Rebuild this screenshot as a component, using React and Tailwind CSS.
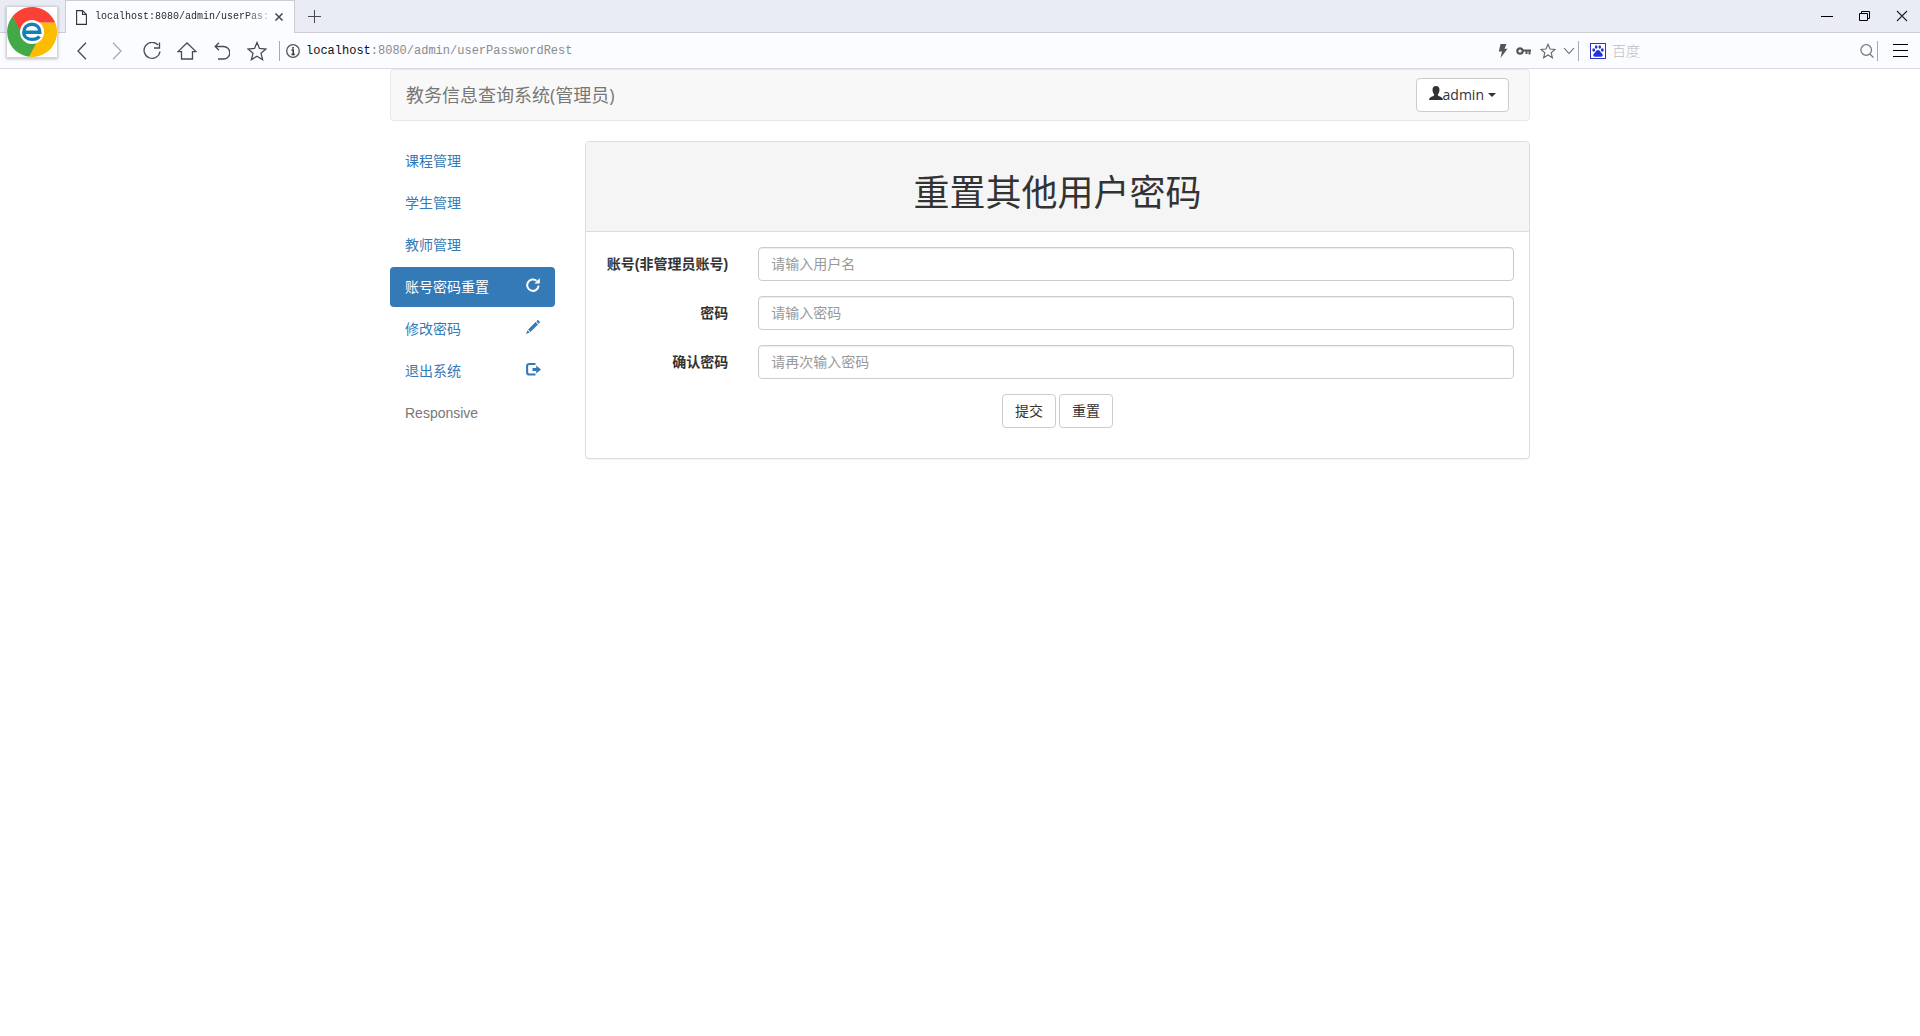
import React from "react";

const cjk = "font-['Liberation_Sans','Noto_Sans_CJK_SC',sans-serif]";

function BrowserLogo() {
  return (
    <svg width="50" height="50" viewBox="0 0 50 50" aria-hidden="true">
      <path d="M25 25 L20 15.500 H48.200 A25 25 0 0 1 22 49.800 Z" fill="#fcbd00" />
      <path d="M25 25 L31 33 L22 49.800 A25 25 0 0 1 5.500 9.500 L16 26 Z" fill="#43a847" />
      <path d="M5.500 9.500 L14 25 L25 25 L30 15.500 H48.200 A25 25 0 0 0 5.500 9.500 Z" fill="#fb4035" />
      <circle cx="25" cy="25" r="12" fill="#fff" />
      <path
        d="M17 25.300 H32.800 C32.800 20.500 29.600 17.300 25 17.300 C20.300 17.300 16.800 20.500 16.800 25.200 C16.800 29.800 20.300 32.400 25.200 32.400 C28.500 32.400 30.800 31.500 32.500 29.500"
        fill="none"
        stroke="#147fb5"
        strokeWidth="3.400"
      />
    </svg>
  );
}

function Line({ w, h, d, stroke = "#4a4a4f", sw = 1.3 }) {
  return (
    <svg width={w} height={h} viewBox={`0 0 ${w} ${h}`} fill="none" stroke={stroke} strokeWidth={sw} aria-hidden="true">
      <path d={d} />
    </svg>
  );
}

const star20 = "M10 1.5 L12.5 7.5 L19 8 L14 12.3 L15.6 18.7 L10 15.2 L4.4 18.7 L6 12.3 L1 8 L7.5 7.5 Z";
const star16 = "M8 1.3 L10 6 L15 6.4 L11.2 9.8 L12.4 14.8 L8 12 L3.6 14.8 L4.8 9.8 L1 6.4 L6 6 Z";

const tools = [
  { label: "后退", w: 10, h: 18, d: "M9 .8 L1 9 L9 17.2" },
  { label: "前进", w: 10, h: 18, d: "M1 .8 L9 9 L1 17.2", stroke: "#a9aab0" },
  { label: "刷新", w: 18, h: 18, d: "M15.2 3.2 A8 8 0 1 0 17 9.5 M16.5 .5 V6 H11" },
  { label: "主页", w: 20, h: 18, d: "M1 9.6 L10 1 L19 9.6 H15.5 V17 H4.5 V9.6 Z" },
  { label: "撤销", w: 16, h: 18, d: "M5 .8 L1.2 4.5 L5 8.2 M1.2 4.5 H9.5 A6.2 6.2 0 0 1 9.5 17 H4" },
  { label: "收藏", w: 20, h: 20, d: star20 },
];

function BrowserChrome() {
  return (
    <header className="relative font-['Liberation_Sans','Noto_Sans_CJK_SC',sans-serif]">
      <div className="flex h-[33px] bg-[#e9ecf5]">
        <div className="w-[65px] border-b border-[#cbcdd3]" />
        <div className="flex w-[230px] items-center border-x border-t border-[#cbcdd3] bg-[#fbfcff] pl-[10px]">
          <svg width="11" height="15" viewBox="0 0 11 15" fill="none" stroke="#333" strokeWidth="1.1" aria-hidden="true">
            <path d="M.6 .6 H6.5 L10.4 4.5 V14.4 H.6 Z M6.5 .6 V4.5 H10.4" />
          </svg>
          <span className="ml-2 bg-linear-to-r from-[#222] from-85% to-[#c8c8c8] bg-clip-text font-['Liberation_Mono',monospace] text-[10px] leading-4 whitespace-nowrap text-transparent">
            localhost:8080/admin/userPas:
          </span>
          <button type="button" aria-label="关闭标签页" className="ml-[5px]">
            <Line w={10} h={10} d="M1.5 1.5 L8.5 8.5 M8.5 1.5 L1.5 8.5" sw={1.6} />
          </button>
        </div>
        <div className="flex flex-1 items-center justify-between border-b border-[#cbcdd3]">
          <button type="button" aria-label="新标签页" className="ml-[12px]">
            <Line w={14} h={14} d="M7.5 1 V14 M1 7.5 H14" sw={1} />
          </button>
          <div className="flex h-full">
            <button type="button" aria-label="最小化" className="flex w-[38px] items-center justify-center">
              <Line w={12} h={12} d="M0 6.5 H12" stroke="#000" sw={1} />
            </button>
            <button type="button" aria-label="还原" className="flex w-[38px] items-center justify-center">
              <Line w={12} h={12} d="M.5 3.5 H8.5 V10.5 H.5 Z M2.5 3.5 V1.5 H10.5 V8.5 H8.5" stroke="#000" sw={1} />
            </button>
            <button type="button" aria-label="关闭" className="flex w-9 items-center justify-center">
              <Line w={12} h={12} d="M1 1 L11 11 M11 1 L1 11" stroke="#222" sw={1.1} />
            </button>
          </div>
        </div>
      </div>

      <div className="flex h-9 items-center border-b border-[#d8dadd] bg-[#fbfcff] pl-16">
        {tools.map((t) => (
          <button key={t.label} type="button" aria-label={t.label} className="flex w-[35px] shrink-0 items-center justify-center">
            <Line w={t.w} h={t.h} d={t.d} stroke={t.stroke} />
          </button>
        ))}
        <div className="ml-[5px] h-5 w-px bg-[#a9aaae]" />
        <svg className="ml-[6px]" width="14" height="14" viewBox="0 0 14 14" aria-hidden="true">
          <circle cx="7" cy="7" r="6.3" fill="none" stroke="#555" strokeWidth="1.3" />
          <path d="M7 3 V4.8 M5.5 6 H7.2 V10.5 M5.5 10.5 H8.8" fill="none" stroke="#333" strokeWidth="1.5" />
        </svg>
        <div role="textbox" aria-label="地址" className="ml-[6px] flex-1 pt-px font-['Liberation_Mono',monospace] text-[12px] leading-4 whitespace-nowrap text-[#8a8a8a]">
          <span className="text-[#111]">localhost</span>:8080/admin/userPasswordRest
        </div>
        <div className="flex items-center">
          <svg width="10" height="14" viewBox="0 0 10 14" fill="#555" aria-hidden="true">
            <path d="M2.5 0 H8.5 L6.5 4.8 H9.5 L2.5 14 L4 7.5 H.8 Z" />
          </svg>
          <svg className="ml-2" width="15" height="10" viewBox="0 0 15 10" fill="none" stroke="#555" aria-hidden="true">
            <circle cx="4" cy="5" r="2.7" strokeWidth="2.2" />
            <path d="M7 4.5 H15 M10.5 5 V8 M13.5 5 V8.5" strokeWidth="2" />
          </svg>
          <button type="button" aria-label="添加收藏" className="ml-[9px]">
            <Line w={16} h={16} d={star16} stroke="#666" sw={1.1} />
          </button>
          <button type="button" aria-label="展开" className="ml-[7px]">
            <Line w={12} h={8} d="M1 1 L6 6.5 L11 1" stroke="#666" sw={1.1} />
          </button>
        </div>
        <div className="ml-[3px] h-5 w-px bg-[#a9aaae]" />
        <svg className="ml-[11px]" width="16" height="16" viewBox="0 0 16 16" aria-hidden="true">
          <rect x=".5" y=".5" width="15" height="15" fill="#fff" stroke="#2a35c0" />
          <g fill="#2433d6">
            <ellipse cx="3.7" cy="7" rx="1.4" ry="1.8" />
            <ellipse cx="6.2" cy="4" rx="1.3" ry="1.8" />
            <ellipse cx="9.8" cy="4" rx="1.3" ry="1.8" />
            <ellipse cx="12.3" cy="7" rx="1.4" ry="1.8" />
            <path d="M8 7 C10 7 10 9 12 10.5 C13.5 12 12.5 14 10.5 13.8 H5.5 C3.5 14 2.5 12 4 10.5 C6 9 6 7 8 7 Z" />
          </g>
        </svg>
        <input
          type="text"
          aria-label="搜索"
          placeholder="百度"
          className="ml-[6px] w-[236px] bg-transparent text-sm leading-5 outline-none placeholder:font-light placeholder:text-[#bdbdbd]"
        />
        <button type="button" aria-label="搜索" className="ml-[12px]">
          <Line w={14} h={14} d="M11.5 6 A5.3 5.3 0 1 1 .9 6 A5.3 5.3 0 1 1 11.5 6 Z M9.8 10 L13.5 13.5" stroke="#777" sw={1.2} />
        </button>
        <div className="ml-[3px] h-5 w-px bg-[#a9aaae]" />
        <button type="button" aria-label="菜单" className="mr-[12px] ml-[15px]">
          <Line w={15} h={13} d="M0 .5 H15 M0 6.5 H15 M0 12.5 H15" stroke="#000" sw={1} />
        </button>
      </div>

      <div className="absolute top-[6px] left-[6px] flex h-[52px] w-[52px] items-center justify-center border border-[#d2d3d6] bg-white shadow-[0_1px_3px_rgba(0,0,0,0.25)]">
        <BrowserLogo />
      </div>
    </header>
  );
}

function RepeatIcon() {
  return (
    <svg width="14" height="14" viewBox="0 0 14 14" aria-hidden="true">
      <path d="M10.6 2.8 A5.7 5.7 0 1 0 12.6 7.6" fill="none" stroke="currentColor" strokeWidth="2" />
      <path d="M13.8 .3 V5.5 H8.4 Z" fill="currentColor" />
    </svg>
  );
}

function PencilIcon() {
  return (
    <svg width="14" height="14" viewBox="0 0 14 14" fill="currentColor" aria-hidden="true">
      <path d="M11.3 .3 Q11.8 -.1 12.3 .3 L13.8 1.8 Q14.2 2.3 13.7 2.8 L12.7 3.8 L10.3 1.4 Z" />
      <path d="M9.6 2.1 L12 4.5 L4.5 12 L2.1 9.6 Z" />
      <path d="M1.5 10.3 L3.8 12.6 L0 14 Z" />
    </svg>
  );
}

function LogoutIcon() {
  return (
    <svg className="overflow-visible" width="14" height="14" viewBox="0 0 14 14" aria-hidden="true">
      <path d="M9.5 2 H3.5 Q1.1 2 1.1 4.3 V10.2 Q1.1 12.5 3.5 12.5 H9.5" fill="none" stroke="currentColor" strokeWidth="2.1" />
      <path d="M6.5 6 H10.2 V3.5 L15 7.5 L10.2 11.5 V9 H6.5 Z" fill="currentColor" />
    </svg>
  );
}

const links = [
  { text: "课程管理" },
  { text: "学生管理" },
  { text: "教师管理" },
  { text: "账号密码重置", Icon: RepeatIcon, active: true },
  { text: "修改密码", Icon: PencilIcon },
  { text: "退出系统", Icon: LogoutIcon },
];

function Sidebar() {
  return (
    <nav className="w-1/6 px-[15px]">
      <ul className="flex flex-col gap-[2px]">
        {links.map(({ text, Icon, active }) => (
          <li key={text}>
            <a
              href="#"
              aria-current={active ? "page" : undefined}
              className={
                "flex justify-between rounded px-[15px] py-[10px] leading-5 " +
                (active ? "bg-[#337ab7] text-white" : "text-[#337ab7]")
              }
            >
              {text}
              {Icon && (
                <span className="pt-px">
                  <Icon />
                </span>
              )}
            </a>
          </li>
        ))}
        <li className="px-[15px] py-[10px] leading-5 text-[#777]">Responsive</li>
      </ul>
    </nav>
  );
}

const fields = [
  { id: "account", label: "账号(非管理员账号)", hint: "请输入用户名", type: "text" },
  { id: "password", label: "密码", hint: "请输入密码", type: "password" },
  { id: "confirm", label: "确认密码", hint: "请再次输入密码", type: "password" },
];

const buttonStyle = "h-[34px] rounded border border-[#ccc] bg-white px-3 leading-5 text-[#333]";

function ResetPanel() {
  return (
    <main className="w-5/6 px-[15px]">
      <section className="rounded border border-[#ddd] bg-white shadow-[0_1px_1px_rgba(0,0,0,0.05)]">
        <div className="rounded-t-[3px] border-b border-[#ddd] bg-[#f5f5f5] px-[15px] pt-7 pb-[21px]">
          <h1 className="text-center font-['Noto_Sans_CJK_SC',sans-serif] text-4xl leading-10 text-[#333]">重置其他用户密码</h1>
        </div>
        <form className="flex flex-col gap-[15px] pt-[15px] pb-[30px]">
          {fields.map((f) => (
            <div key={f.id} className="flex">
              <label htmlFor={f.id} className="w-1/6 px-[15px] pt-[7px] text-right leading-5 font-bold whitespace-nowrap">
                {f.label}
              </label>
              <div className="w-5/6 px-[15px]">
                <input
                  id={f.id}
                  type={f.type}
                  placeholder={f.hint}
                  className="h-[34px] w-full rounded border border-[#ccc] bg-white px-3 leading-5 text-[#555] shadow-[inset_0_1px_1px_rgba(0,0,0,0.075)] placeholder:text-[#999]"
                />
              </div>
            </div>
          ))}
          <div className="flex justify-center gap-[3px]">
            <button type="submit" className={buttonStyle}>提交</button>
            <button type="reset" className={buttonStyle}>重置</button>
          </div>
        </form>
      </section>
    </main>
  );
}

export default function App() {
  return (
    <div className="min-h-screen bg-white">
      <BrowserChrome />
      <div className={"mx-auto max-w-[1170px] px-[15px] text-sm text-[#333] " + cjk}>
        <div className="mb-5 flex items-center justify-between rounded border border-[#e7e7e7] bg-[#f8f8f8] pr-5 pl-[15px]">
          <a href="#" className="py-[15px] font-['Open_Sans','Noto_Sans_CJK_SC',sans-serif] text-lg leading-5 text-[#777]">
            教务信息查询系统(管理员)
          </a>
          <button
            type="button"
            aria-haspopup="menu"
            className="flex h-[34px] items-center rounded border border-[#ccc] bg-white px-3 font-['Open_Sans',sans-serif] leading-5"
          >
            <svg className="mb-1" width="14" height="14" viewBox="0 0 14 14" fill="#333" aria-hidden="true">
              <path d="M7 0 C9.3 0 10.6 1.6 10.5 4 C10.4 6 9.8 7.2 8.9 8.2 V9.5 C10 10.5 14 11 14 14 H0 C0 11 4 10.5 5.1 9.5 V8.2 C4.2 7.2 3.6 6 3.5 4 C3.4 1.6 4.7 0 7 0 Z" />
            </svg>
            admin
            <svg className="ml-1" width="8" height="4" viewBox="0 0 8 4" fill="#333" aria-hidden="true">
              <path d="M0 0 H8 L4 4 Z" />
            </svg>
          </button>
        </div>
        <div className="-mx-[15px] flex">
          <Sidebar />
          <ResetPanel />
        </div>
      </div>
    </div>
  );
}
